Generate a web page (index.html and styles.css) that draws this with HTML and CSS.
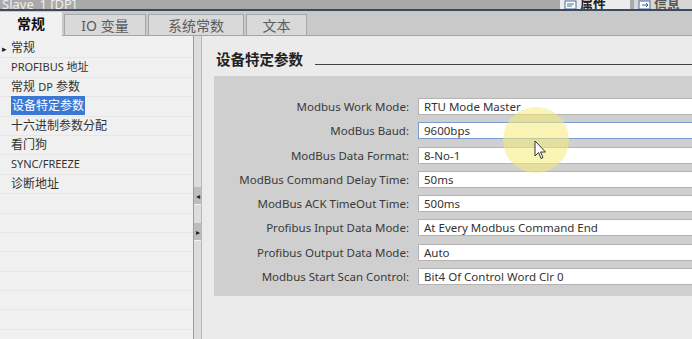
FILE: index.html
```html
<!DOCTYPE html>
<html lang="zh-CN">
<head>
    <meta charset="UTF-8">
    <title>设备特定参数</title>
    <link rel="stylesheet" href="styles.css">
</head>
<body>
    <!-- Title strip with inspector tabs -->
    <div class="titlebar">
        <span class="title-text">Slave_1 [DP]</span>
        <div class="title-tabs">
            <div class="ttab ttab-active">
                <svg width="14" height="10" viewBox="0 0 14 10"><rect x="1" y="1" width="11" height="8" fill="#fff" stroke="#4a6a9a"/><path d="M3 4h7M3 6h5" stroke="#4a6a9a"/></svg>
                <span>属性</span>
            </div>
            <div class="ttab">
                <svg width="14" height="10" viewBox="0 0 14 10"><rect x="1" y="1" width="11" height="8" fill="#fff" stroke="#4a6a9a"/><path d="M4 5h6M8 3l2 2-2 2" stroke="#2a5fb0" fill="none"/></svg>
                <span>信息</span>
            </div>
        </div>
    </div>

    <!-- Tab row -->
    <div class="tabs">
        <div class="tab active">常规</div>
        <div class="tab">IO 变量</div>
        <div class="tab">系统常数</div>
        <div class="tab">文本</div>
    </div>

    <div class="main">
        <!-- Navigation tree -->
        <div class="nav">
            <div class="nav-item"><span class="caret">▸</span>常规</div>
            <div class="nav-item sub latin">PROFIBUS 地址</div>
            <div class="nav-item sub">常规 <span class="latin">DP</span> 参数</div>
            <div class="nav-item sub"><span class="selected">设备特定参数</span></div>
            <div class="nav-item sub">十六进制参数分配</div>
            <div class="nav-item sub">看门狗</div>
            <div class="nav-item sub latin">SYNC/FREEZE</div>
            <div class="nav-item sub">诊断地址</div>
            <div class="nav-item"></div>
            <div class="nav-item"></div>
            <div class="nav-item"></div>
            <div class="nav-item"></div>
            <div class="nav-item"></div>
            <div class="nav-item"></div>
            <div class="nav-item"></div>
        </div>

        <!-- Splitter -->
        <div class="splitter">
            <div class="split-btn">◂</div>
            <div class="split-btn">▸</div>
        </div>

        <!-- Parameter panel -->
        <div class="content">
            <div class="section-head">
                <span>设备特定参数</span>
                <div class="rule"></div>
            </div>
            <div class="params">
                <label>Modbus Work Mode:</label><div class="field">RTU Mode Master</div>
                <label>ModBus Baud:</label><div class="field focus">9600bps</div>
                <label>ModBus Data Format:</label><div class="field">8-No-1</div>
                <label>ModBus Command Delay Time:</label><div class="field">50ms</div>
                <label>ModBus ACK TimeOut Time:</label><div class="field">500ms</div>
                <label>Profibus Input Data Mode:</label><div class="field">At Every Modbus Command End</div>
                <label>Profibus Output Data Mode:</label><div class="field">Auto</div>
                <label>Modbus Start Scan Control:</label><div class="field">Bit4 Of Control Word Clr 0</div>
            </div>
        </div>
    </div>

    <!-- Mouse highlight overlay -->
    <div class="spot"></div>
    <svg class="cursor" width="12" height="20" viewBox="0 0 12 20">
        <path d="M1 1v15l3.5-3.5 2.5 6 2-1-2.5-5.5h5z" fill="#fff" stroke="#333" stroke-width="1"/>
    </svg>
</body>
</html>
```

FILE: styles.css
```css
body {
    margin: 0;
    width: 692px;
    height: 339px;
    overflow: hidden;
    font-family: "Noto Sans", "Noto Sans CJK SC", sans-serif;
    background: #ebebeb;
    color: #333;
    position: relative;
}

.titlebar {
    height: 9px;
    background: #a9a9a9;
    border-bottom: 2px solid #3c4a5e;
    display: flex;
    justify-content: space-between;
    overflow: hidden;
}

.title-text {
    font-size: 13px;
    color: #eee;
    line-height: 8px;
    height: 9px;
    overflow: hidden;
    padding-left: 2px;
}

.title-tabs {
    display: flex;
    gap: 4px;
    margin-right: -12px;
}

.ttab {
    width: 70px;
    height: 9px;
    overflow: hidden;
    font-size: 13px;
    font-weight: bold;
    line-height: 8px;
    background: #d6d6d6;
    color: #555;
    display: flex;
    align-items: flex-start;
    gap: 2px;
    padding-left: 4px;
    box-sizing: border-box;
}

.ttab-active {
    background: #ececec;
    color: #222;
}

.tabs {
    height: 24px;
    background: #c9c9c9;
    border-bottom: 1px solid #a6a6a6;
    display: flex;
    align-items: flex-end;
    gap: 2px;
}

.tab {
    height: 21px;
    font-size: 14px;
    line-height: 21px;
    color: #5c5c5c;
    background: #d9d9d9;
    border: 1px solid #a8a8a8;
    border-bottom: none;
    box-sizing: border-box;
    text-align: center;
}

.tab:nth-child(2) { width: 82px; }
.tab:nth-child(3) { width: 96px; }
.tab:nth-child(4) { width: 61px; }

.tab.active {
    width: 62px;
    height: 24px;
    background: #f0f0f0;
    color: #111;
    font-weight: bold;
    border: none;
    margin-bottom: -1px;
    line-height: 24px;
}

.main {
    display: flex;
    height: 303px;
}

.nav {
    width: 193px;
    background: #f0f0f0;
    padding-top: 3px;
}

.nav-item {
    height: 18.4px;
    line-height: 18px;
    border-bottom: 1px solid #e6e6e6;
    font-size: 12px;
    color: #333;
    padding-left: 2px;
    white-space: nowrap;
}

.nav-item.sub {
    padding-left: 11px;
}

.caret {
    font-size: 9px;
    display: inline-block;
    width: 9px;
    color: #222;
}

.latin {
    font-size: 11px;
}

.selected {
    background: #3a78d4;
    color: #fff;
    padding: 1px 1px;
}

.splitter {
    width: 7px;
    background: #dcdcdc;
    border-left: 1px solid #9c9c9c;
    border-right: 1px solid #b8b8b8;
    display: flex;
    flex-direction: column;
    align-items: center;
    padding-top: 151px;
    gap: 18px;
}

.split-btn {
    width: 7px;
    height: 17px;
    background: #bdbdbd;
    border-bottom: 1px solid #f5f5f5;
    font-size: 8px;
    line-height: 17px;
    text-align: center;
    color: #222;
}

.content {
    flex: 1;
    padding-left: 12px;
    background: #ebebeb;
}

.section-head {
    display: flex;
    align-items: flex-end;
    height: 31px;
    gap: 12px;
    padding-left: 2px;
}

.section-head span {
    font-size: 14.5px;
    font-weight: bold;
    color: #222;
    line-height: 16px;
}

.rule {
    flex: 1;
    border-bottom: 1px solid #444;
    margin-bottom: 2px;
}

.params {
    margin-top: 9px;
    height: 220px;
    box-sizing: border-box;
    background: #cfcfcf;
    padding: 22px 0 0 0;
    display: grid;
    grid-template-columns: 195px 1fr;
    column-gap: 9px;
    row-gap: 7.3px;
    align-content: start;
}

.params label {
    text-align: right;
    font-size: 11.5px;
    line-height: 17px;
    color: #3a3a3a;
    white-space: nowrap;
}

.field {
    height: 17px;
    line-height: 15px;
    background: #fff;
    border: 1px solid #b4b4b4;
    border-right: none;
    box-sizing: border-box;
    font-size: 11.5px;
    padding-left: 5px;
    color: #333;
    white-space: nowrap;
}

.field.focus {
    border-color: #7c9bd0;
}

.spot {
    position: absolute;
    left: 503px;
    top: 107px;
    width: 66px;
    height: 66px;
    border-radius: 50%;
    background: rgba(248, 236, 120, 0.55);
}

.cursor {
    position: absolute;
    left: 534px;
    top: 140px;
}
```
